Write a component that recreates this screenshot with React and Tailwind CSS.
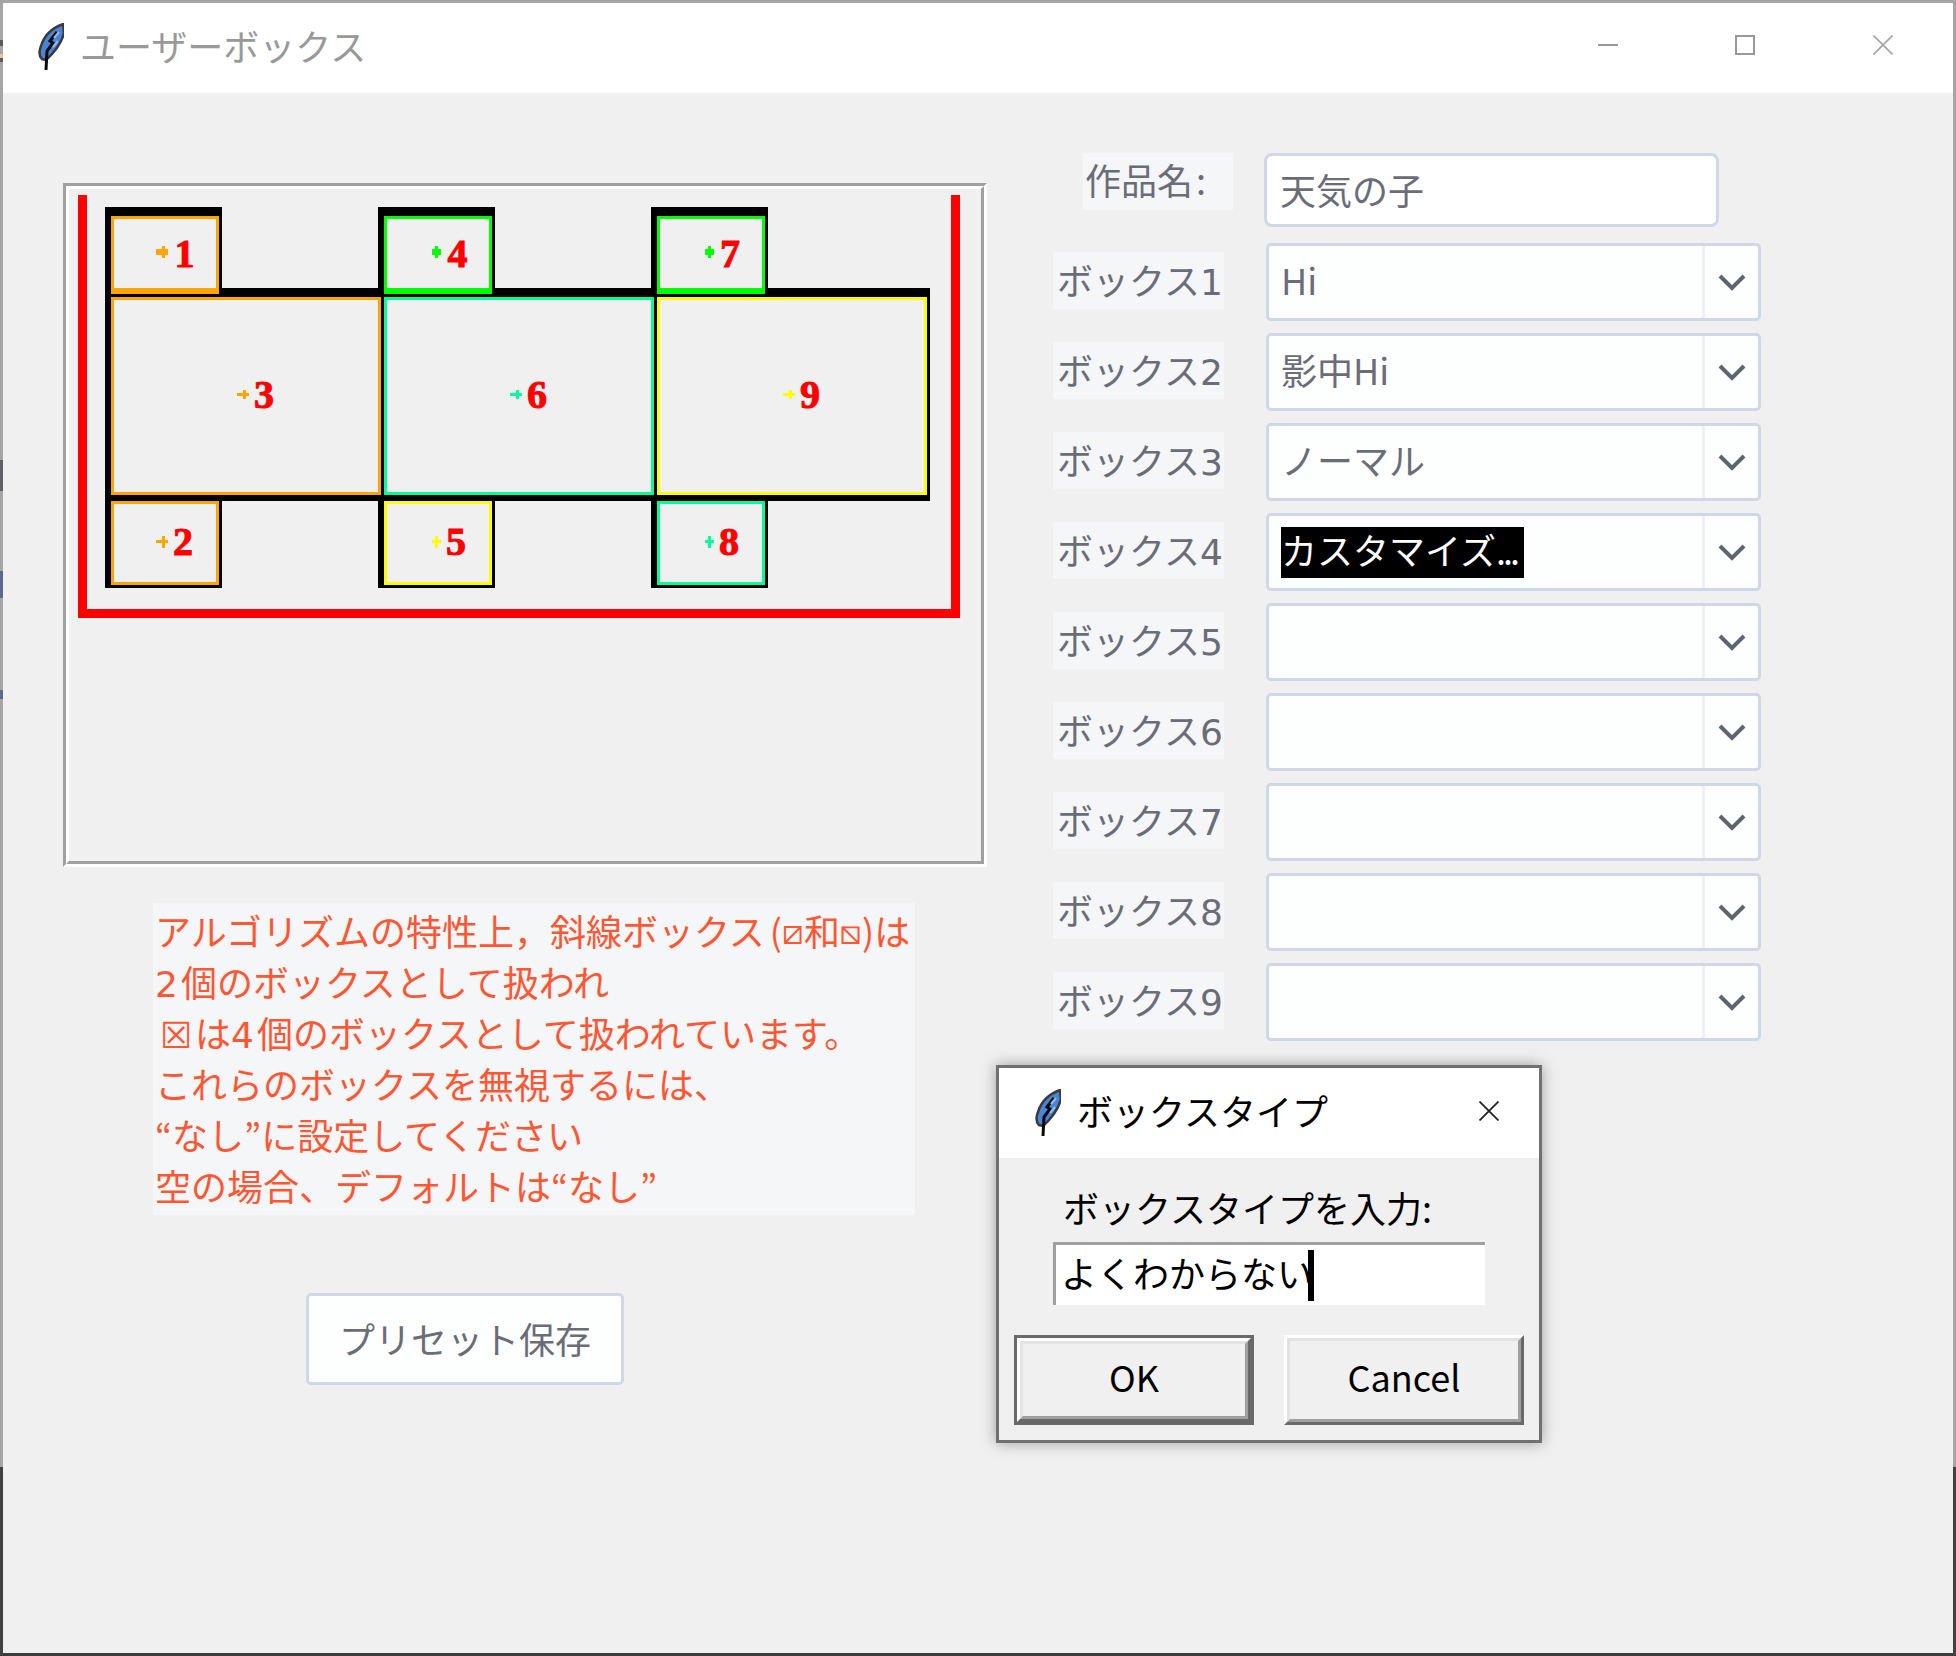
const rows = [
  { label: 'ボックス', digit: '1', value: 'Hi' },
  { label: 'ボックス', digit: '2', value: '影中Hi' },
  { label: 'ボックス', digit: '3', value: 'ノーマル' },
  { label: 'ボックス', digit: '4', value: 'カスタマイズ', selected: true },
  { label: 'ボックス', digit: '5' },
  { label: 'ボックス', digit: '6' },
  { label: 'ボックス', digit: '7' },
  { label: 'ボックス', digit: '8' },
  { label: 'ボックス', digit: '9' },
]

const ORANGE = '#ffa500'
const GREEN = '#00ff00'
const SPRING = '#00ff99'
const YELLOW = '#ffff00'

// black backing of the net
const backing = [
  [105, 207, 117, 90],
  [378, 207, 117, 90],
  [651, 207, 117, 90],
  [105, 288, 825, 213],
  [105, 501, 117, 87],
  [378, 501, 117, 87],
  [651, 501, 117, 87],
]

// x0, y0, x1, y1, colour, bottom border
const boxes = [
  [111, 216, 219, 294, ORANGE, 6],
  [384, 216, 492, 294, GREEN, 6],
  [657, 216, 765, 294, GREEN, 6],
  [111, 297, 381, 495, ORANGE, 3],
  [384, 297, 654, 495, SPRING, 3],
  [657, 297, 927, 495, YELLOW, 3],
  [111, 501, 219, 585, ORANGE, 3],
  [384, 501, 492, 585, YELLOW, 3],
  [657, 501, 765, 585, SPRING, 3],
]

// digit, text centre, baseline, plus x0, plus width, vertical x, plus y, bar height, vertical height, colour
const marks = [
  ['1', 184.5, 267, 156, 12, 162, 249, 6, 12, ORANGE],
  ['4', 457.5, 267, 432, 9, 435, 249, 6, 12, GREEN],
  ['7', 730, 267, 705, 9, 708, 249, 6, 12, GREEN],
  ['3', 264, 408, 237, 12, 243, 393, 3, 9, ORANGE],
  ['6', 537, 408, 510, 12, 516, 393, 3, 9, SPRING],
  ['9', 810, 408, 783, 12, 789, 393, 3, 9, YELLOW],
  ['2', 183, 555, 156, 12, 162, 540, 3, 12, ORANGE],
  ['5', 456, 555, 432, 9, 435, 540, 3, 12, YELLOW],
  ['8', 729, 555, 705, 9, 708, 540, 3, 12, SPRING],
]

// bits of the desktop showing through the left frame: y, height, colour
const frameBits = [
  [40, 6, '#5a5a62'],
  [54, 4, '#e8c890'],
  [58, 4, '#5a5a72'],
  [460, 31, '#5f5f66'],
  [571, 27, '#5f6a8a'],
  [690, 9, '#5f6a8a'],
]

const Feather = () => (
  <svg width="26" height="48" viewBox="0 0 26 48" className="shrink-0 blur-[0.4px]">
    <path d="M25 1 L26 10 C24 18 18 28 8 37 L4 36 C1 33 1 28 3 23 C6 13 14 5 25 1 Z" fill="#4a84d6" stroke="#3a3a3a" strokeWidth="2.5" />
    <path d="M19 9 L12 18 L15 20 L9 28 L8 47" fill="none" stroke="#0a0a0a" strokeWidth="3" />
    <path d="M21 9 L16 15 M20 18 L15 24" fill="none" stroke="#8fbcf0" strokeWidth="2" />
  </svg>
)

const Chevron = () => (
  <svg width="28" height="18" viewBox="0 0 28 18">
    <path d="M2 3 L14 15 L26 3" fill="none" stroke="#5f6570" strokeWidth="4" />
  </svg>
)

const Net = () => (
  <svg width="912" height="672" viewBox="69 189 912 672" className="block" shapeRendering="crispEdges">
    <rect x="78" y="195" width="9" height="423" fill="#ff0000" />
    <rect x="951" y="195" width="9" height="423" fill="#ff0000" />
    <rect x="78" y="609" width="882" height="9" fill="#ff0000" />
    {backing.map(([x, y, w, h], i) => (
      <rect key={i} x={x} y={y} width={w} height={h} fill="#000000" />
    ))}
    {boxes.map(([x0, y0, x1, y1, color, bottom], i) => (
      <g key={i}>
        <rect x={x0} y={y0} width={x1 - x0} height={y1 - y0} fill={color} />
        <rect x={x0 + 3} y={y0 + 3} width={x1 - x0 - 6} height={y1 - y0 - 3 - bottom} fill="#f0f0f0" />
      </g>
    ))}
    {marks.map(([digit, tx, ty, px, pw, vx, py, bh, vh, color]) => (
      <g key={digit}>
        <rect x={px} y={py} width={pw} height={bh} fill={color} />
        <rect x={vx} y={py + bh / 2 - vh / 2} width="3" height={vh} fill={color} />
        <text x={tx} y={ty} textAnchor="middle" fontFamily="'Liberation Serif', serif" fontWeight="700" className="fill-[#ff0000] stroke-[#ff0000] stroke-[1px] text-[40px]">
          {digit}
        </text>
      </g>
    ))}
  </svg>
)

const Relief = ({ children }) => (
  <div className="h-full w-full border-3 border-t-white border-l-white border-r-[#696969] border-b-[#696969]">
    <div className="flex h-full w-full items-center justify-center border-3 border-t-[#e3e3e3] border-l-[#e3e3e3] border-r-[#a0a0a0] border-b-[#a0a0a0] bg-[#f0f0f0] pb-[8px] text-[36px] text-black">
      {children}
    </div>
  </div>
)

const NoteLine = ({ children }) => <div className="h-[51px]">{children}</div>

export default function App() {
  return (
    <div className="relative flex h-[1656px] w-[1956px] flex-col border-3 border-[#a5a5a5] border-b-[#3c3c3c] bg-[#f0f0f0] font-['Noto_Sans_CJK_JP',sans-serif]">
      {/* darker bit of the frame at the bottom of both sides */}
      <div className="absolute -left-[3px] top-[1464px] h-[189px] w-[3px] bg-[#424242]" />
      <div className="absolute -right-[3px] top-[1464px] h-[189px] w-[3px] bg-[#424242]" />
      {frameBits.map(([y, h, color]) => (
        <div key={y} className="absolute -left-[3px] -top-[3px] w-[3px]" style={{ marginTop: y, height: h, background: color }} />
      ))}

      {/* Title bar */}
      <div className="flex h-[90px] shrink-0 items-center bg-white">
        <div className="mb-[2px] ml-[35px] mr-[16px]">
          <Feather />
        </div>
        <span className="mb-[6px] text-[36px] leading-none text-[#999999]">ユーザーボックス</span>
        <div className="ml-auto mr-[60px] flex items-center pb-[6px]">
          <div className="h-[2px] w-[20px] bg-[#999999]" />
          <div className="ml-[117px] h-[20px] w-[20px] border-2 border-[#999999]" />
          <svg width="20" height="20" viewBox="0 0 20 20" className="ml-[118px]">
            <path d="M0.5 0.5 L19.5 19.5 M19.5 0.5 L0.5 19.5" stroke="#a3a3a3" strokeWidth="1.6" />
          </svg>
        </div>
      </div>

      {/* Body */}
      <div className="flex flex-1">
        <div className="w-[984px] shrink-0 pl-[60px] pt-[90px]">
          <div className="h-[684px] w-[924px] border-3 border-t-[#a0a0a0] border-l-[#a0a0a0] border-r-white border-b-white">
            <div className="h-full w-full border-3 border-t-white border-l-white border-r-[#a0a0a0] border-b-[#a0a0a0]">
              <Net />
            </div>
          </div>

          <div className="ml-[90px] mt-[36px] h-[312px] w-[762px] whitespace-nowrap bg-[#f5f6f8] pl-[2px] pt-[2px] text-[36px] leading-[51px] text-[#ff5733]">
            <NoteLine>
              アルゴリズムの特性上{'\uFF0C'}斜線ボックス<span className="ml-[5px]">(</span><span className="align-[2px] font-['DejaVu_Sans',sans-serif] text-[34px] leading-none">⧄</span>和<span className="align-[2px] font-['DejaVu_Sans',sans-serif] text-[34px] leading-none">⧅</span>)は
            </NoteLine>
            <NoteLine>
              <span className="mr-[3px] font-['DejaVu_Sans',sans-serif] leading-none">2</span>個のボックスとして扱われ
            </NoteLine>
            <NoteLine>
              <span className="inline-block w-[40px] pl-[5px] leading-none">☒</span>は<span className="mr-[3px] font-['DejaVu_Sans',sans-serif] leading-none">4</span>個のボックスとして扱われています。
            </NoteLine>
            <NoteLine>これらのボックスを無視するには、</NoteLine>
            <NoteLine>“なし”に設定してください</NoteLine>
            <NoteLine>空の場合、デフォルトは“なし”</NoteLine>
          </div>

          <button className="ml-[243px] mt-[78px] h-[92px] w-[318px] rounded-[5px] border-3 border-[#d0d7e6] bg-[#fdfefe] pb-[3px] text-[36px] text-[#6a6d78]">
            プリセット保存
          </button>
        </div>

        <div className="flex-1 pt-[60px]">
          <div className="flex h-[74px] items-start">
            <div className="ml-[96px] flex h-[57px] w-[150px] items-center bg-[#f5f6f8] pb-[5px] pl-[2px] text-[36px] leading-none text-[#6a6d78]">
              作品名<span className="ml-[3px]">:</span>
            </div>
            <div className="ml-[31px] flex h-[74px] w-[455px] items-center rounded-[8px] border-3 border-[#d0d7e6] bg-white pb-[3px] pl-[13px] text-[36px] text-[#6a6d78]">
              天気の子
            </div>
          </div>

          <div className="mt-[16px] flex flex-col gap-[12px]">
            {rows.map((row) => (
              <div key={row.digit} className="flex h-[78px] items-start">
                <div className="ml-[66px] mt-[9px] flex h-[57px] w-[171px] items-center bg-[#f5f6f8] pl-[4px] text-[36px] leading-none text-[#6a6d78]">
                  <div>
                    {row.label}
                    <span className="font-['DejaVu_Sans',sans-serif]">{row.digit}</span>
                  </div>
                </div>
                <div className="ml-[42px] flex h-[78px] w-[495px] rounded-[5px] border-3 border-[#d0d7e6] bg-[#fdfefe]">
                  <div className="flex min-w-0 flex-1 items-center pl-[12px] text-[36px] text-[#6a6d78]">
                    {row.selected ? (
                      <span className="flex h-[51px] w-[243px] items-center whitespace-nowrap bg-black pb-[7px] text-white">
                        {row.value}
                        <span className="tracking-[-3px]">...</span>
                      </span>
                    ) : (
                      <span className="mb-[7px]">{row.value}</span>
                    )}
                  </div>
                  <div className="flex w-[56px] items-center justify-center border-l-3 border-[#eef0f5]">
                    <Chevron />
                  </div>
                </div>
              </div>
            ))}
          </div>
        </div>
      </div>

      {/* Input dialog sitting over the window */}
      <div className="absolute left-[993px] top-[1062px] flex h-[378px] w-[546px] flex-col border-3 border-[#707070] bg-[#f0f0f0] shadow-[0_0_14px_rgba(0,0,0,0.35)]">
        <div className="flex h-[90px] shrink-0 items-center bg-white">
          <div className="ml-[36px] mr-[16px]">
            <Feather />
          </div>
          <span className="mb-[6px] text-[36px] leading-none text-black">ボックスタイプ</span>
          <svg width="20" height="20" viewBox="0 0 20 20" className="mb-[4px] ml-auto mr-[40px]">
            <path d="M0.5 0.5 L19.5 19.5 M19.5 0.5 L0.5 19.5" stroke="#222222" strokeWidth="1.8" />
          </svg>
        </div>
        <div className="ml-[64px] mt-[25px] text-[36px] leading-[48px] text-black">ボックスタイプを入力:</div>
        <div className="ml-[54px] mt-[11px] flex h-[63px] w-[432px] items-center border-l-3 border-t-3 border-[#a0a0a0] bg-white pl-[5px] text-[36px] text-black">
          <span className="mb-[6px] w-[247px] whitespace-nowrap">よくわからない</span>
          <div className="relative h-[51px] w-[6px] bg-black" />
        </div>
        <div className="ml-[15px] mt-[30px] flex gap-[30px]">
          <div className="h-[90px] w-[240px] border-3 border-[#696969]">
            <Relief>OK</Relief>
          </div>
          <div className="h-[90px] w-[240px]">
            <Relief>Cancel</Relief>
          </div>
        </div>
      </div>
    </div>
  )
}
